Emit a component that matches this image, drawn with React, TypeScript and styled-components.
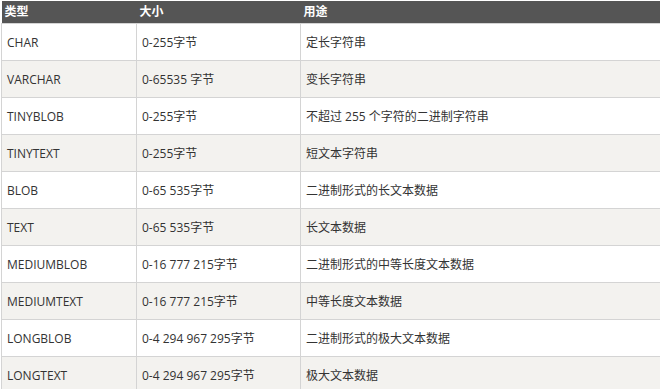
import React from "react";
import styled, { createGlobalStyle } from "styled-components";

const Global = createGlobalStyle`
  html, body { margin: 0; padding: 0; background: #fff; }
  body { font-family: "Open Sans", "Noto Sans CJK SC", sans-serif; overflow: hidden; }
`;

const Page = styled.div`
  padding: 1px 0 0 1px;
  width: 680px;
`;

const Table = styled.table`
  border-collapse: collapse;
  width: 680px;
  table-layout: fixed;
  font-size: 12px;
  color: #333;
`;

const HeadCell = styled.th<{ $w?: number }>`
  background: #555;
  color: #fff;
  font-weight: 700;
  text-align: left;
  height: 22px;
  padding: 0 3px;
  line-height: 22px;
  box-sizing: border-box;
  ${(p) => (p.$w ? `width: ${p.$w}px;` : "")}
`;

const Row = styled.tr<{ $alt: boolean }>`
  background: ${(p) => (p.$alt ? "#f3f2ef" : "#fff")};
`;

const Cell = styled.td`
  border: 1px solid #d4d4d4;
  height: 37px;
  padding: 0 5px;
  box-sizing: border-box;
  vertical-align: middle;
  white-space: nowrap;
`;

const rows: [string, string, string][] = [
  ["CHAR", "0-255字节", "定长字符串"],
  ["VARCHAR", "0-65535 字节", "变长字符串"],
  ["TINYBLOB", "0-255字节", "不超过 255 个字符的二进制字符串"],
  ["TINYTEXT", "0-255字节", "短文本字符串"],
  ["BLOB", "0-65 535字节", "二进制形式的长文本数据"],
  ["TEXT", "0-65 535字节", "长文本数据"],
  ["MEDIUMBLOB", "0-16 777 215字节", "二进制形式的中等长度文本数据"],
  ["MEDIUMTEXT", "0-16 777 215字节", "中等长度文本数据"],
  ["LONGBLOB", "0-4 294 967 295字节", "二进制形式的极大文本数据"],
  ["LONGTEXT", "0-4 294 967 295字节", "极大文本数据"],
];

export default function App() {
  return (
    <Page>
      <Global />
      <Table>
        <thead>
          <tr>
            <HeadCell $w={135}>类型</HeadCell>
            <HeadCell $w={164}>大小</HeadCell>
            <HeadCell>用途</HeadCell>
          </tr>
        </thead>
        <tbody>
          {rows.map((r, i) => (
            <Row key={r[0]} $alt={i % 2 === 1}>
              <Cell>{r[0]}</Cell>
              <Cell>{r[1]}</Cell>
              <Cell>{r[2]}</Cell>
            </Row>
          ))}
        </tbody>
      </Table>
    </Page>
  );
}
